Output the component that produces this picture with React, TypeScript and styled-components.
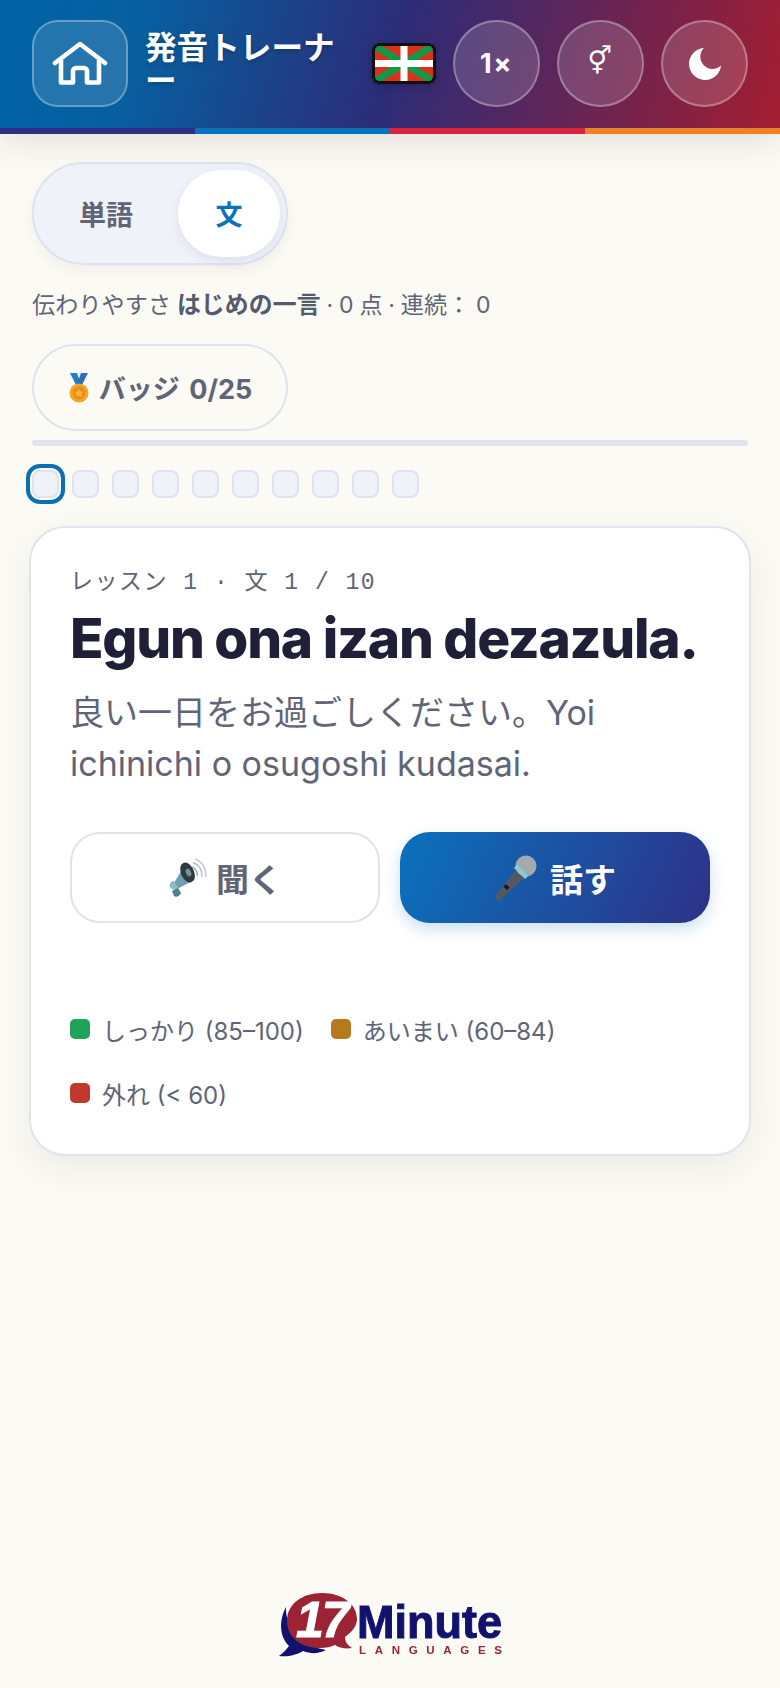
import React from 'react';
import styled, { createGlobalStyle } from 'styled-components';

const GlobalStyle = createGlobalStyle`
  * { box-sizing: border-box; }
  html, body { margin: 0; padding: 0; }
  body {
    background: #fbfaf4;
    font-family: Inter, "Noto Sans CJK JP", sans-serif;
    color: #5f6478;
  }
`;

const Page = styled.div`
  display: flex;
  flex-direction: column;
  min-height: 1688px;
`;

const Header = styled.header`
  display: flex;
  align-items: center;
  height: 134px;
  padding: 0 32px 7px 32px;
  position: relative;
  background: linear-gradient(105deg, #0063a6 0%, #075fa0 18%, #2c2c78 50%, #a41d30 100%);
  box-shadow: 0 8px 30px rgba(40, 40, 60, 0.12);
`;

const Stripe = styled.div`
  position: absolute;
  left: 0;
  right: 0;
  bottom: 0;
  height: 6px;
  background: linear-gradient(
    90deg,
    #2e2e86 0 25%,
    #0a72bd 25% 50%,
    #d9263c 50% 75%,
    #f08026 75% 100%
  );
`;

const HomeButton = styled.button`
  flex: none;
  display: flex;
  align-items: center;
  justify-content: center;
  width: 96px;
  height: 87px;
  padding: 0;
  border: 2px solid rgba(255, 255, 255, 0.3);
  border-radius: 26px;
  background: rgba(255, 255, 255, 0.13);
`;

const Title = styled.h1`
  flex: 1;
  min-width: 0;
  margin: 0 15px 0 17px;
  color: #fff;
  font-size: 31.6px;
  font-weight: 700;
  line-height: 33px;
  text-shadow: 0 2px 4px rgba(0, 0, 0, 0.2);
`;

const Flag = styled.svg`
  flex: none;
  display: block;
  width: 64px;
  height: 41px;
  filter: drop-shadow(0 2px 3px rgba(0, 0, 0, 0.2));
`;

const RoundButton = styled.button`
  flex: none;
  display: flex;
  align-items: center;
  justify-content: center;
  width: 87px;
  height: 87px;
  padding: 0;
  margin-left: 17px;
  border: 2px solid rgba(255, 255, 255, 0.3);
  border-radius: 50%;
  background: rgba(255, 255, 255, 0.15);
  color: #fff;
  font-family: inherit;
  font-size: 27px;
  font-weight: 700;
  letter-spacing: 1.5px;
`;

const GenderGlyph = styled.span`
  font-family: "DejaVu Sans", sans-serif;
  font-size: 27px;
  font-weight: 400;
  line-height: 1;
  margin-top: -6px;
`;

const Main = styled.main`
  display: flex;
  flex-direction: column;
  align-items: flex-start;
  padding: 28px 32px 0;
`;

const Segment = styled.div`
  display: flex;
  align-items: center;
  width: 256px;
  height: 103px;
  padding: 0 6px 0 0;
  border: 2px solid #dfe2ef;
  border-radius: 52px;
  background: #eff2f9;
  box-shadow: 0 6px 14px rgba(40, 40, 80, 0.05);
`;

const SegmentItem = styled.div<{ $active?: boolean }>`
  display: flex;
  align-items: center;
  justify-content: center;
  height: 87px;
  width: ${p => (p.$active ? '103px' : '145px')};
  border-radius: 44px;
  background: ${p => (p.$active ? '#fff' : 'transparent')};
  color: ${p => (p.$active ? '#0a72bd' : '#5f6478')};
  font-size: 27px;
  font-weight: 700;
  box-shadow: ${p => (p.$active ? '0 4px 12px rgba(40, 40, 80, 0.08)' : 'none')};
`;

const Stats = styled.div`
  margin-top: 24px;
  font-size: 23px;
  line-height: 32px;
  letter-spacing: 0.2px;
  word-spacing: -1px;
  b { font-size: 23.8px; font-weight: 700; color: #555a6e; }
`;

const BadgeButton = styled.button`
  display: flex;
  align-items: center;
  justify-content: center;
  gap: 9px;
  width: 256px;
  height: 87px;
  margin-top: 23px;
  padding: 0;
  border: 2px solid #dfe2ef;
  border-radius: 44px;
  background: transparent;
  color: #5f6478;
  font-family: inherit;
  font-size: 27px;
  font-weight: 700;
  word-spacing: 3px;
`;

const Track = styled.div`
  align-self: stretch;
  height: 6px;
  margin-top: 9px;
  border-radius: 3px;
  background: #e2e2ee;
`;

const Dots = styled.div`
  display: flex;
  gap: 13px;
  margin-top: 24px;
`;

const Dot = styled.div<{ $current?: boolean }>`
  width: 27px;
  height: 28px;
  border: 2px solid #dfe2ef;
  border-radius: 8px;
  background: #eff2f9;
  outline: ${p => (p.$current ? '4px solid #0a6fb5' : 'none')};
  outline-offset: 2px;
`;

const Card = styled.section`
  align-self: stretch;
  margin: 28px -3px 0;
  height: 630px;
  padding: 41px 39px 0;
  border: 2px solid #e1e3ef;
  border-radius: 36px;
  background: #fff;
  box-shadow: 0 12px 36px rgba(40, 40, 60, 0.07);
`;

const Label = styled.div`
  font-family: "Liberation Mono", "Noto Sans CJK JP", monospace;
  font-size: 23px;
  line-height: 28px;
  letter-spacing: 1.5px;
  color: #5f6478;
`;

const Phrase = styled.h2`
  margin: 8px 0 0;
  color: #1f2038;
  font-size: 55px;
  font-weight: 800;
  line-height: 66px;
  letter-spacing: -1.25px;
  white-space: nowrap;
`;

const Translation = styled.p`
  margin: 16px 0 0;
  font-size: 34px;
  line-height: 51px;
  color: #5f6478;
`;

const Actions = styled.div`
  display: grid;
  grid-template-columns: 310px 310px;
  gap: 20px;
  margin-top: 43px;
`;

const ActionButton = styled.button<{ $primary?: boolean }>`
  display: flex;
  align-items: center;
  justify-content: center;
  gap: ${p => (p.$primary ? '12px' : '8px')};
  height: 91px;
  padding: 0;
  border: ${p => (p.$primary ? 'none' : '2px solid #e0e2ee')};
  border-radius: 30px;
  background: ${p => (p.$primary ? 'linear-gradient(115deg, #0a72bd, #2e3188)' : '#fff')};
  color: ${p => (p.$primary ? '#fff' : '#5f6478')};
  font-family: inherit;
  font-size: 33px;
  font-weight: 700;
  box-shadow: ${p => (p.$primary ? '0 6px 16px rgba(10, 114, 189, 0.22)' : 'none')};
`;

const Legend = styled.div`
  display: flex;
  flex-wrap: wrap;
  gap: 36px 27px;
  margin-top: 92px;
`;

const LegendItem = styled.div`
  display: flex;
  align-items: center;
  gap: 12px;
  height: 28px;
  font-size: 24px;
  color: #5f6478;
`;

const Swatch = styled.span<{ $color: string }>`
  flex: none;
  width: 20px;
  height: 20px;
  border-radius: 5px;
  background: ${p => p.$color};
`;

const Footer = styled.footer`
  display: flex;
  justify-content: center;
  margin-top: auto;
  padding-bottom: 26px;
`;

const LogoSvg = styled.svg`
  display: block;
  width: 240px;
  height: 72px;
  filter: drop-shadow(0 0 4px #fff);
`;

const HomeIcon = () => (
  <svg width="56" height="46" viewBox="0 0 56 46" fill="none" stroke="#fff" strokeWidth="4.6" strokeLinecap="round" strokeLinejoin="round">
    <path d="M3 22 28 3l25 19" />
    <path d="M9 19v22.500h12V30a3 3 0 0 1 3-3h8a3 3 0 0 1 3 3v11.500h12V19" />
  </svg>
);

const MoonIcon = () => (
  <svg width="32" height="32" viewBox="0 0 32 32" fill="#fff">
    <path d="M15 0A16 16 0 1 0 32 17.500 12 12 0 0 1 15 0Z" />
  </svg>
);

const MedalIcon = () => (
  <svg width="22" height="30" viewBox="0 0 22 30">
    <path d="M2 0h7l4 11-4 3Z" fill="#1f7fd1" />
    <path d="M20 0h-7L9 11l4 3Z" fill="#2f6fb8" />
    <circle cx="11" cy="20" r="9.500" fill="#f5a623" />
    <circle cx="11" cy="20" r="6.500" fill="#f08a1d" />
    <path d="m11 15.500 1.400 3 3.200.3-2.400 2.100.7 3.100-2.900-1.600-2.900 1.600.7-3.100-2.400-2.100 3.200-.3Z" fill="#f7b733" />
  </svg>
);

const SpeakerIcon = () => (
  <svg width="40" height="40" viewBox="0 0 40 40" fill="none">
    <path d="M24 9c3.500 1.500 5.500 4.500 5.500 9" stroke="#aab2b8" strokeWidth="1.600" />
    <path d="M25 4.500c6 2 9 7 9 14" stroke="#b9c0c6" strokeWidth="1.600" />
    <path d="M27 1c7 2.500 11 9 11 18" stroke="#c9ced3" strokeWidth="1.600" />
    <path d="M6 25 18 5c5 2 9 9 8.500 17L9 31Z" fill="#6f9fb0" />
    <ellipse cx="19.500" cy="14.500" rx="6.500" ry="10.500" transform="rotate(-24 19.500 14.500)" fill="#2f3a40" />
    <ellipse cx="20.500" cy="14.500" rx="2.500" ry="4" transform="rotate(-24 20.500 14.500)" fill="#7f8f98" />
    <path d="M2 29c-1.500-2 1-6 4-6l4 7c-2 3-6 2-8-1Z" fill="#8abccb" />
    <path d="M4 33l6-3 3 5c-1 3-5 5-7 3Z" fill="#4f7f8f" />
  </svg>
);

const MicIcon = () => (
  <svg width="44" height="46" viewBox="0 0 44 46">
    <path d="M1 41 22 15l8 8L6 45c-2 1-6-2-5-4Z" fill="#55595e" />
    <path d="m12 29 3.500 3.500-2.500 2.500-3.500-3.500Z" fill="#16181b" />
    <circle cx="32" cy="11" r="10.500" fill="#a3a9ae" />
    <path d="m20 13 11 11 3.500-3L23 9.500Z" fill="#8cc8dd" />
  </svg>
);

const Logo = () => (
  <LogoSvg viewBox="-7 0 240 72">
    <path d="M9 17C2 30 2 46 12 56 9 60 6 63 2 66c9 1 18-1 24-5 8 3 15 3 23-1C26 56 8 40 9 17Z" fill="#12126e" />
    <path d="M45 3C25 3 10 14 10 31s15 27 33 27c6 0 11-1 15-3 4 3 11 4 17 3-5-3-7-7-7-11 7-5 12-11 12-18C80 14 65 3 45 3Z" fill="#9c2333" />
    <text x="19" y="47" fontFamily="Liberation Sans" fontWeight="700" fontStyle="italic" fontSize="50" fill="#fff" stroke="#fff" strokeWidth="1" letterSpacing="-2">17</text>
    <text x="80" y="48" fontFamily="Liberation Sans" fontWeight="700" fontSize="46" fill="#12126e" stroke="#12126e" strokeWidth="1" textLength="145" lengthAdjust="spacingAndGlyphs">Minute</text>
    <text x="82" y="64" fontFamily="Liberation Sans" fontWeight="700" fontSize="11.500" fill="#9c2333" textLength="143">LANGUAGES</text>
  </LogoSvg>
);

export default function App() {
  return (
    <Page>
      <GlobalStyle />
      <Header>
        <HomeButton aria-label="home"><HomeIcon /></HomeButton>
        <Title>発音トレーナー</Title>
        <Flag viewBox="0 0 64 41">
          <rect x="1.500" y="1.500" width="61" height="38" rx="6" fill="#d8321f" />
          <path d="M3 3 61 38M61 3 3 38" stroke="#0f9a4a" strokeWidth="7" />
          <path d="M32 2v37M2 20.500h60" stroke="#fff" strokeWidth="7" />
          <rect x="1.500" y="1.500" width="61" height="38" rx="6" fill="none" stroke="#111" strokeWidth="3" />
        </Flag>
        <RoundButton>1×</RoundButton>
        <RoundButton><GenderGlyph>⚥</GenderGlyph></RoundButton>
        <RoundButton aria-label="theme"><MoonIcon /></RoundButton>
        <Stripe />
      </Header>
      <Main>
        <Segment>
          <SegmentItem>単語</SegmentItem>
          <SegmentItem $active>文</SegmentItem>
        </Segment>
        <Stats>伝わりやすさ <b>はじめの一言</b> · 0 点 · 連続： 0</Stats>
        <BadgeButton><MedalIcon />バッジ 0/25</BadgeButton>
        <Track />
        <Dots>
          {Array.from({ length: 10 }, (_, i) => <Dot key={i} $current={i === 0} />)}
        </Dots>
        <Card>
          <Label>レッスン 1 · 文 1 / 10</Label>
          <Phrase>Egun ona izan dezazula.</Phrase>
          <Translation>良い一日をお過ごしください。Yoi ichinichi o osugoshi kudasai.</Translation>
          <Actions>
            <ActionButton><SpeakerIcon />聞く</ActionButton>
            <ActionButton $primary><MicIcon />話す</ActionButton>
          </Actions>
          <Legend>
            <LegendItem><Swatch $color="#1fa35a" />しっかり (85–100)</LegendItem>
            <LegendItem><Swatch $color="#b57a1e" />あいまい (60–84)</LegendItem>
            <LegendItem><Swatch $color="#c0392b" />外れ (&lt; 60)</LegendItem>
          </Legend>
        </Card>
      </Main>
      <Footer><Logo /></Footer>
    </Page>
  );
}
